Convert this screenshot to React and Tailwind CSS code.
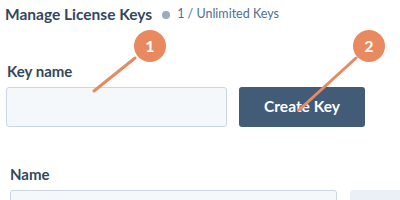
import React from "react";

export default function App() {
  return (
    <div className="relative w-[400px] h-[200px] overflow-hidden bg-white text-[#33475b]" style={{ fontFamily: "Lato, 'Open Sans', sans-serif" }}>
      <div className="flex items-center pl-[5px] pt-[5px] h-[24px]">
        <span className="text-[15.5px] font-bold leading-none">Manage License Keys</span>
        <span className="ml-[10px] w-[8px] h-[8px] rounded-full bg-[#99acc2] shrink-0" />
        <span className="ml-[7px] text-[12.5px] text-[#516f90] leading-none">1 / Unlimited Keys</span>
      </div>
      <div className="pl-[6px] pt-[40px]">
        <div className="text-[15px] font-bold leading-none pl-[1px]">Key name</div>
        <div className="flex mt-[8px] gap-[12px]">
          <div className="shrink-0 w-[221px] h-[40px] bg-[#f5f8fa] border border-[#cbd6e2] rounded-[3px]" />
          <button className="shrink-0 w-[126px] h-[40px] bg-[#425b76] rounded-[3px] text-white text-[15.5px] font-bold">Create Key</button>
        </div>
      </div>
      <div className="pl-[10px] pt-[40px]">
        <div className="text-[15px] font-bold leading-none">Name</div>
        <div className="flex mt-[8px] gap-[13px]">
          <div className="shrink-0 w-[327px] h-[40px] bg-[#f5f8fa] border border-[#cbd6e2] rounded-[3px]" />
          <div className="shrink-0 w-[60px] h-[40px] bg-[#eaf0f6] rounded-[3px]" />
        </div>
      </div>
      <svg className="absolute left-0 top-0 pointer-events-none" width="400" height="200">
        <line x1="135" y1="58" x2="94" y2="91" stroke="#e8895f" strokeWidth="3" strokeLinecap="round" />
        <line x1="356" y1="58" x2="299" y2="110" stroke="#e8895f" strokeWidth="3" strokeLinecap="round" />
      </svg>
      <div className="absolute left-[134px] top-[30px] w-[32px] h-[32px] rounded-full bg-[#e8895f] flex items-center justify-center text-white text-[16px] font-bold">1</div>
      <div className="absolute left-[353px] top-[30px] w-[32px] h-[32px] rounded-full bg-[#e8895f] flex items-center justify-center text-white text-[16px] font-bold">2</div>
    </div>
  );
}
